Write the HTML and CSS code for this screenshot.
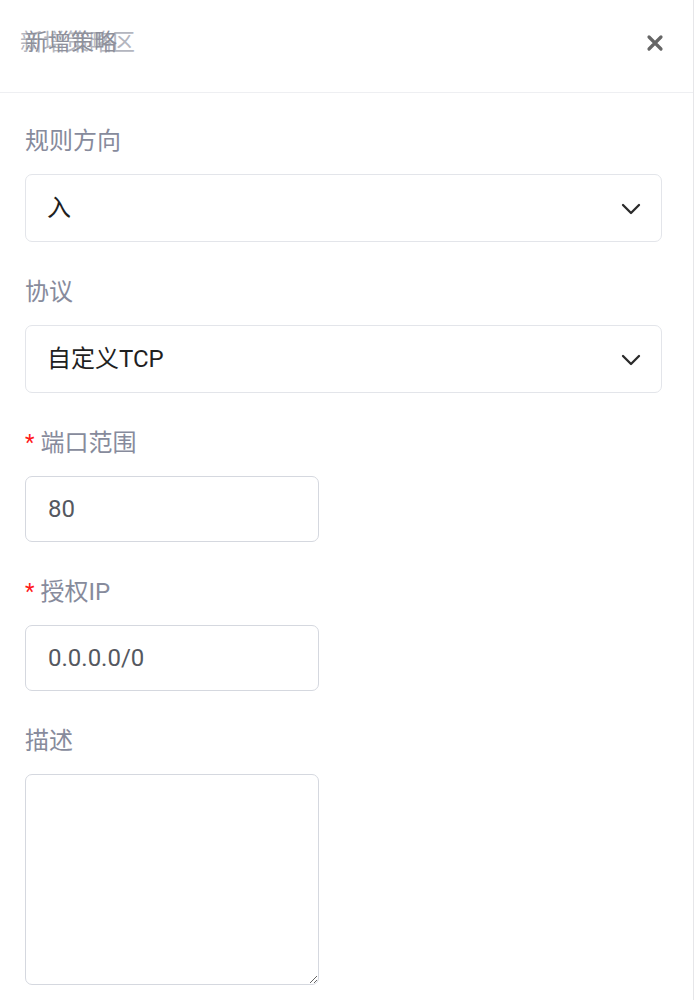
FILE: index.html
```html
<!DOCTYPE html>
<html lang="zh-CN">
<head>
<meta charset="utf-8">
<title>新增策略</title>
<link rel="stylesheet" href="styles.css">
</head>
<body>
<div class="drawer">
  <header class="drawer-header">
    <div class="title">
      <span class="title-back">新增策略区</span>
      <span class="title-front">新增策略</span>
    </div>
    <button class="close" aria-label="关闭">
      <svg width="18" height="18" viewBox="0 0 18 18"><path d="M3 3 L15 15 M15 3 L3 15" stroke="#666" stroke-width="3.2" stroke-linecap="round" fill="none"/></svg>
    </button>
  </header>
  <form class="form">
    <div class="item">
      <label class="label">规则方向</label>
      <div class="select">
        <span class="value">入</span>
        <svg class="chev" width="20" height="12" viewBox="0 0 20 12"><path d="M2 2 L10 10 L18 2" stroke="#2a2a2a" stroke-width="2.3" fill="none" stroke-linecap="round" stroke-linejoin="round"/></svg>
      </div>
    </div>
    <div class="item">
      <label class="label">协议</label>
      <div class="select">
        <span class="value">自定义TCP</span>
        <svg class="chev" width="20" height="12" viewBox="0 0 20 12"><path d="M2 2 L10 10 L18 2" stroke="#2a2a2a" stroke-width="2.3" fill="none" stroke-linecap="round" stroke-linejoin="round"/></svg>
      </div>
    </div>
    <div class="item">
      <label class="label"><span class="star">*</span>端口范围</label>
      <div class="input"><span class="ivalue">80</span></div>
    </div>
    <div class="item">
      <label class="label"><span class="star">*</span>授权IP</label>
      <div class="input"><span class="ivalue">0.0.0.0/0</span></div>
    </div>
    <div class="item">
      <label class="label">描述</label>
      <textarea class="textarea"></textarea>
    </div>
  </form>
</div>
</body>
</html>
```
FILE: styles.css
```css
* { box-sizing: border-box; }
html, body { margin: 0; padding: 0; background: #fff; }
body {
  font-family: "Roboto", "Noto Sans CJK SC", "Noto Sans", sans-serif;
  width: 695px;
  height: 1000px;
  overflow: hidden;
}
.drawer {
  width: 694px;
  height: 1000px;
  border-right: 1px solid #e6e6e9;
  background: #fff;
}
.drawer-header {
  height: 93px;
  border-bottom: 1px solid #eeeff2;
  display: flex;
  align-items: center;
  justify-content: space-between;
  padding: 0 29px 0 20px;
}
.title {
  position: relative;
  font-size: 23px;
  line-height: 30px;
  height: 30px;
  margin-top: -6px;
}
.title-back { color: #b4b6bf; }
.title-front {
  position: absolute;
  left: 5px;
  top: 0;
  color: #8e909b;
}
.close {
  border: 0;
  background: none;
  padding: 0;
  width: 18px;
  height: 18px;
  margin-top: -7px;
  display: flex;
}
.form {
  padding: 32px 31px 0 25px;
}
.item {
  display: flex;
  flex-direction: column;
  margin-bottom: 34px;
}
.label {
  font-size: 24px;
  line-height: 32px;
  height: 32px;
  color: #878b9c;
  margin-bottom: 17px;
}
.star {
  color: #ff1a1a;
  font-size: 22px;
  margin-right: 6px;
  position: relative;
  top: -1px;
}
.select {
  height: 68px;
  border: 1px solid #e3e5ea;
  border-radius: 7px;
  display: flex;
  align-items: center;
  justify-content: space-between;
  padding: 0 20px 0 21px;
}
.value {
  font-size: 24px;
  color: #1f1f1f;
  line-height: 30px;
}
.chev { margin-top: 2px; }
.input {
  width: 294px;
  height: 66px;
  border: 1.5px solid #d5d8df;
  border-radius: 7px;
  display: flex;
  align-items: center;
  padding: 0 22px;
}
.ivalue {
  font-size: 24px;
  color: #555860;
  line-height: 30px;
}
.textarea {
  width: 294px;
  height: 211px;
  border: 1.5px solid #d5d8df;
  border-radius: 7px;
  resize: vertical;
  font-family: inherit;
  outline: none;
  margin: 0;
}
```
